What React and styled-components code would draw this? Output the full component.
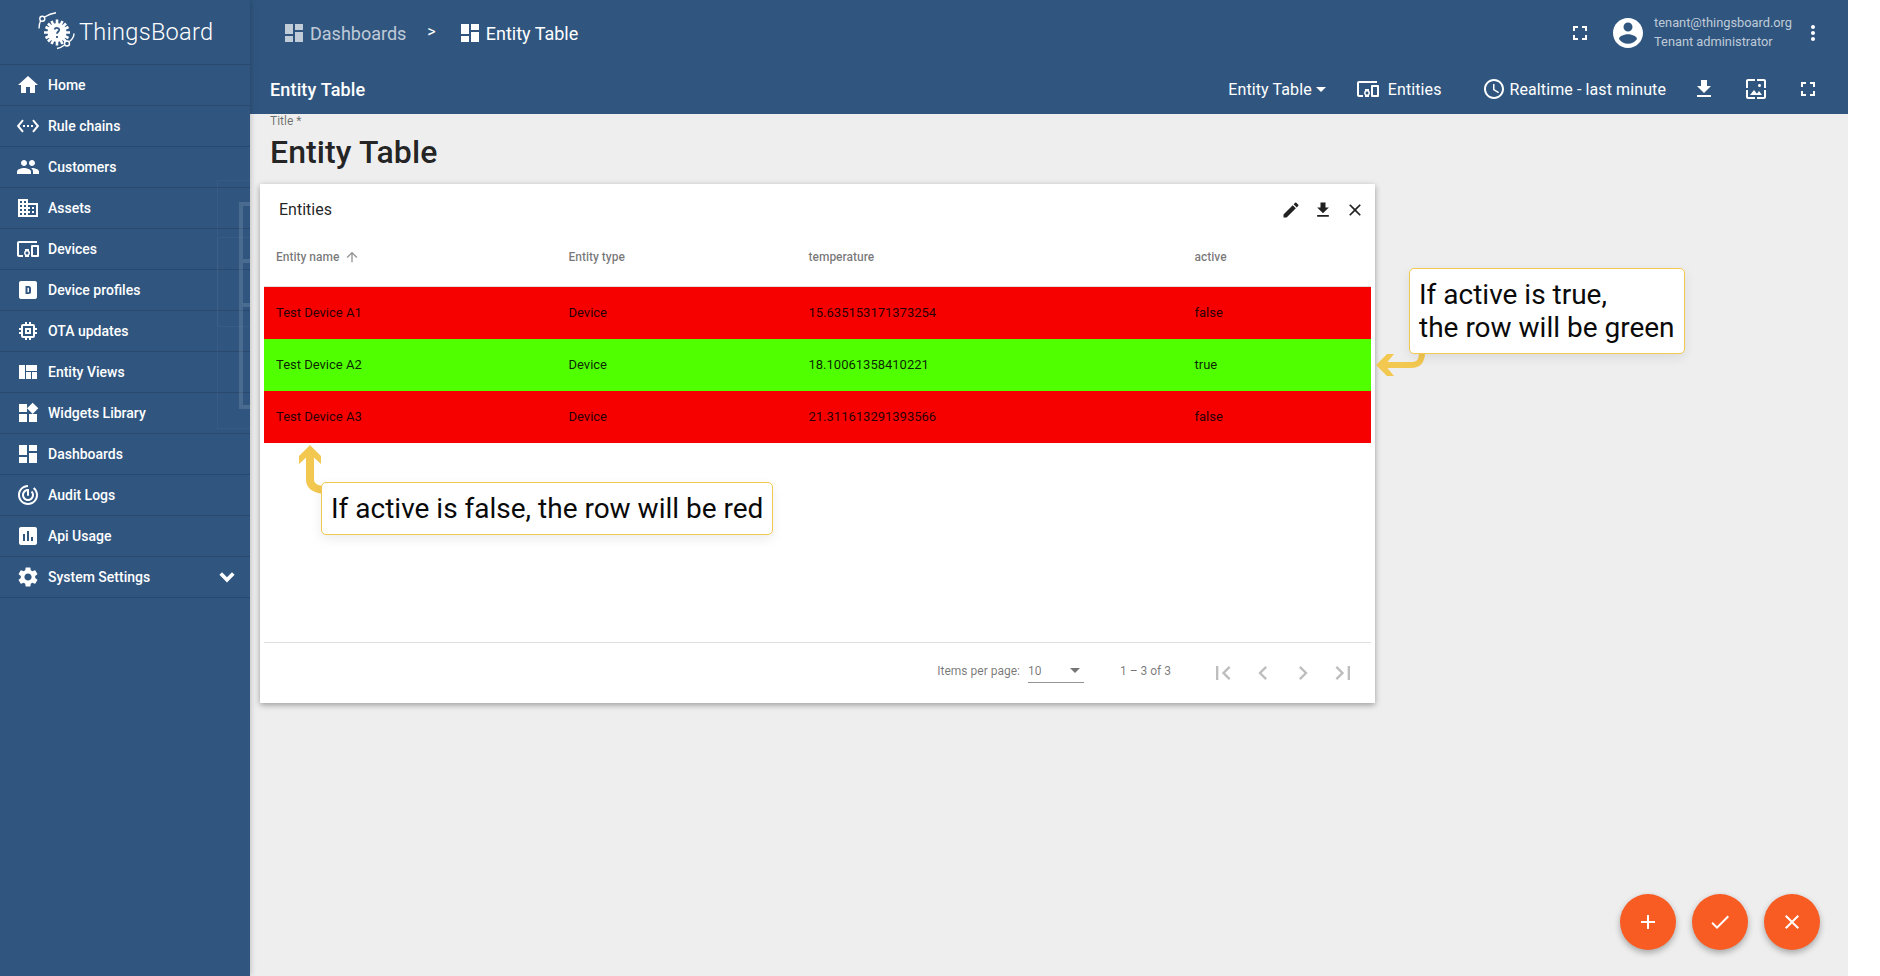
import React from 'react'
import styled, { createGlobalStyle } from 'styled-components'

const GlobalStyle = createGlobalStyle`
  html, body {
    margin: 0;
    padding: 0;
    height: 976px;
    overflow: hidden;
    background: #fff;
    font-family: Roboto, "Liberation Sans", sans-serif;
  }
`

const Page = styled.div`
  position: relative;
  display: flex;
  width: 1848px;
  height: 976px;
  overflow: hidden;
  background: #eeeeee;
`

const Sidebar = styled.aside`
  position: relative;
  width: 250px;
  flex: none;
  background: #305680;
  color: #fff;
  box-shadow: 0 0 6px rgba(0, 0, 0, 0.25);
  z-index: 3;
`

const GhostLines = styled.svg`
  position: absolute;
  left: 217px;
  top: 180px;
  pointer-events: none;
`

const LogoRow = styled.div`
  height: 65px;
  box-sizing: border-box;
  display: flex;
  align-items: center;
  padding: 0 0 0 37px;
  gap: 2px;
  font-size: 23.6px;
  font-weight: 300;
  letter-spacing: 0.25px;
  border-bottom: 1px solid rgba(0, 0, 0, 0.14);
`

const MenuRow = styled.div`
  height: 41px;
  box-sizing: border-box;
  display: flex;
  align-items: center;
  padding: 0 10px 0 16px;
  gap: 8px;
  font-size: 14px;
  font-weight: 500;
  border-bottom: 1px solid rgba(0, 0, 0, 0.14);
`

const MenuIcon = styled.svg`
  width: ${(p) => p.$size || 24}px;
  height: ${(p) => p.$size || 24}px;
  flex: none;
  fill: #fff;
`

const MenuLabel = styled.span`
  flex: 1;
`

const Main = styled.div`
  flex: 1;
  display: flex;
  flex-direction: column;
  min-width: 0;
`

const Header = styled.header`
  height: 114px;
  flex: none;
  background: #305680;
  color: #fff;
  display: flex;
  flex-direction: column;
`

const TopBar = styled.div`
  height: 66px;
  display: flex;
  align-items: center;
  padding: 0 23px 0 32px;
`

const Crumb = styled.div`
  display: flex;
  align-items: center;
  gap: 4px;
  font-size: 18px;
  color: ${(p) => (p.$dim ? 'rgba(255,255,255,0.7)' : '#fff')};
`

const CrumbIcon = styled.svg`
  width: 24px;
  height: 24px;
  fill: currentColor;
`

const CrumbSep = styled.span`
  font-size: 16px;
  margin: 0 22px 0 21px;
  position: relative;
  top: -2px;
`

const Spacer = styled.div`
  flex: 1;
`

const UserBlock = styled.div`
  display: flex;
  flex-direction: column;
  gap: 4px;
  margin: -2px 9px 0 8px;
  font-size: 12.8px;
  line-height: 15px;
  color: rgba(255, 255, 255, 0.7);
`

const BarIcon = styled.svg`
  width: ${(p) => p.$size || 24}px;
  height: ${(p) => p.$size || 24}px;
  fill: #fff;
  flex: none;
  display: block;
  margin-left: ${(p) => p.$ml || 0}px;
`

const ToolBar = styled.div`
  height: 48px;
  box-sizing: border-box;
  display: flex;
  align-items: center;
  padding: 0 28px 2px 20px;
  font-size: 16px;
  letter-spacing: 0.1px;
`

const BoardTitle = styled.div`
  font-size: 18px;
  font-weight: 500;
  letter-spacing: 0.15px;
`

const ToolText = styled.div`
  display: flex;
  align-items: center;
  gap: ${(p) => p.$gap ?? 4}px;
  margin-left: ${(p) => p.$ml || 0}px;
`

const Caret = styled.span`
  width: 0;
  height: 0;
  border-left: 5px solid transparent;
  border-right: 5px solid transparent;
  border-top: 5px solid ${(p) => p.$color || '#fff'};
  display: inline-block;
`

const Content = styled.div`
  flex: 1;
  padding: 0 0 0 10px;
  position: relative;
`

const TitleLabel = styled.div`
  font-size: 12px;
  line-height: 14px;
  color: rgba(0, 0, 0, 0.54);
  margin: 0 0 0 10px;
`

const TitleValue = styled.div`
  font-size: 32px;
  font-weight: 500;
  line-height: 38px;
  letter-spacing: 0.1px;
  color: rgba(0, 0, 0, 0.87);
  margin: 5px 0 0 10px;
`

const Card = styled.section`
  width: 1115px;
  height: 519px;
  box-sizing: border-box;
  margin-top: 13px;
  background: #fff;
  box-shadow: 0 2px 6px rgba(0, 0, 0, 0.35);
  display: flex;
  flex-direction: column;
  padding: 0 4px;
`

const CardHead = styled.div`
  height: 49px;
  box-sizing: border-box;
  flex: none;
  display: flex;
  align-items: center;
  padding: 2px 6px 0 15px;
  font-size: 16px;
  color: rgba(0, 0, 0, 0.87);
`

const CardActions = styled.div`
  display: flex;
  gap: 12px;
`

const GreyIcon = styled.svg`
  width: 20px;
  height: 20px;
  fill: rgba(0, 0, 0, 0.87);
  display: block;
`

const Grid = styled.div`
  display: grid;
  grid-template-columns: 292.5px 240px 386px 1fr;
  height: ${(p) => p.$h}px;
  align-items: center;
  padding: 0 0 ${(p) => (p.$head ? 6 : 2)}px 12px;
  box-sizing: border-box;
  font-size: ${(p) => (p.$head ? 12 : 13)}px;
  background: ${(p) => p.$bg || 'transparent'};
  color: ${(p) => (p.$head ? 'rgba(0,0,0,0.54)' : 'rgba(0,0,0,0.87)')};
  font-weight: ${(p) => (p.$head ? 500 : 400)};
  border-bottom: ${(p) => (p.$head ? '1px solid rgba(0,0,0,0.12)' : 'none')};
`

const HeadCell = styled.div`
  display: flex;
  align-items: center;
  gap: 5px;
`

const SortIcon = styled.svg`
  width: 16px;
  height: 16px;
  fill: rgba(0, 0, 0, 0.42);
`

const Pager = styled.div`
  margin-top: auto;
  height: 61px;
  flex: none;
  box-sizing: border-box;
  border-top: 1px solid rgba(0, 0, 0, 0.12);
  display: flex;
  align-items: center;
  justify-content: flex-end;
  padding: 0 14px 4px 0;
  font-size: 12px;
  color: rgba(0, 0, 0, 0.54);
`

const PageSelect = styled.div`
  width: 56px;
  height: 24px;
  box-sizing: border-box;
  margin: 0 36px 0 8px;
  border-bottom: 1px solid rgba(0, 0, 0, 0.42);
  color: rgba(0, 0, 0, 0.54);
  display: flex;
  align-items: center;
  justify-content: space-between;
  padding: 0 4px 0 0;
`

const PageButtons = styled.div`
  display: flex;
  gap: 12px;
  margin: 4px 0 0 38px;
`

const PageIcon = styled.svg`
  width: 28px;
  height: 28px;
  fill: rgba(0, 0, 0, 0.26);
  display: block;
`

const Callout = styled.div`
  position: absolute;
  left: ${(p) => p.$x}px;
  top: ${(p) => p.$y}px;
  box-sizing: border-box;
  background: #fff;
  border: 1px solid #f3c850;
  border-radius: 5px;
  padding: 9px 9px;
  font-size: 28px;
  line-height: 33px;
  color: #0a0a0a;
  white-space: nowrap;
  box-shadow: 0 4px 12px rgba(0, 0, 0, 0.08);
  z-index: 5;
`

const Arrow = styled.svg`
  position: absolute;
  left: ${(p) => p.$x}px;
  top: ${(p) => p.$y}px;
  z-index: 4;
`

const Fabs = styled.div`
  position: absolute;
  right: 28px;
  bottom: 26px;
  display: flex;
  gap: 16px;
  z-index: 4;
`

const Fab = styled.div`
  width: 56px;
  height: 56px;
  border-radius: 50%;
  background: #f85c23;
  box-shadow: 0 3px 6px rgba(0, 0, 0, 0.3);
  display: flex;
  align-items: center;
  justify-content: center;
`

const paths = {
  home: 'M10 20v-6h4v6h5v-8h3L12 3 2 12h3v8z',
  rule: 'M7.77 6.76L6.23 5.48.82 12l5.41 6.52 1.54-1.28L3.42 12l4.35-5.24zM7 13h2v-2H7v2zm10-2h-2v2h2v-2zm-6 2h2v-2h-2v2zm6.77-7.52l-1.54 1.28L20.58 12l-4.35 5.24 1.54 1.28L23.18 12l-5.41-6.52z',
  people: 'M16 11c1.66 0 2.99-1.34 2.99-3S17.66 5 16 5s-3 1.34-3 3 1.34 3 3 3zm-8 0c1.66 0 2.99-1.34 2.99-3S9.66 5 8 5 5 6.34 5 8s1.34 3 3 3zm0 2c-2.33 0-7 1.17-7 3.5V19h14v-2.5C15 14.17 10.33 13 8 13zm8 0c-.29 0-.62.02-.97.05 1.16.84 1.97 1.97 1.97 3.45V19h6v-2.5c0-2.33-4.67-3.5-7-3.5z',
  domain: 'M12 7V3H2v18h20V7H12zM6 19H4v-2h2v2zm0-4H4v-2h2v2zm0-4H4V9h2v2zm0-4H4V5h2v2zm4 12H8v-2h2v2zm0-4H8v-2h2v2zm0-4H8V9h2v2zm0-4H8V5h2v2zm10 12h-8v-2h2v-2h-2v-2h2v-2h-2V9h8v10zm-2-8h-2v2h2v-2zm0 4h-2v2h2v-2z',
  devices: 'M3 6h18V4H3c-1.1 0-2 .9-2 2v12c0 1.1.9 2 2 2h4v-2H3V6zm10 6H9v1.78c-.61.55-1 1.33-1 2.22s.39 1.67 1 2.22V20h4v-1.78c.61-.55 1-1.34 1-2.22s-.39-1.67-1-2.22V12zm-2 5.5c-.83 0-1.5-.67-1.5-1.5s.67-1.5 1.5-1.5 1.5.67 1.5 1.5-.67 1.5-1.5 1.5zM22 8h-6c-.5 0-1 .5-1 1v10c0 .5.5 1 1 1h6c.5 0 1-.5 1-1V9c0-.5-.5-1-1-1zm-1 10h-4v-8h4v8z',
  profile: 'M19 3H5c-1.1 0-2 .9-2 2v14c0 1.1.9 2 2 2h14c1.1 0 2-.9 2-2V5c0-1.1-.9-2-2-2zM9.5 8h3.2c1.5 0 2.3 1 2.3 2.3v3.4c0 1.3-.8 2.3-2.3 2.3H9.5V8zm2 1.7v4.6h.9c.4 0 .6-.3.6-.7v-3.2c0-.4-.2-.7-.6-.7h-.9z',
  chip: 'M15 9H9v6h6V9zm-2 4h-2v-2h2v2zm8-2V9h-2V7c0-1.1-.9-2-2-2h-2V3h-2v2h-2V3H9v2H7c-1.1 0-2 .9-2 2v2H3v2h2v2H3v2h2v2c0 1.1.9 2 2 2h2v2h2v-2h2v2h2v-2h2c1.1 0 2-.9 2-2v-2h2v-2h-2v-2h2zm-4 6H7V7h10v10z',
  view: 'M3 5v14h6V5H3zm7 0v6h11V5H10zm0 7v7h5v-7h-5zm6 0v7h5v-7h-5z',
  widgets: 'M13 13v8h8v-8h-8zM3 21h8v-8H3v8zM3 3v8h8V3H3zm13.66-1.31L11 7.34 16.66 13l5.66-5.66-5.66-5.65z',
  dashboard: 'M3 13h8V3H3v10zm0 8h8v-6H3v6zm10 0h8V11h-8v10zm0-18v6h8V3h-8z',
  audit: 'M12 2C6.48 2 2 6.48 2 12s4.48 10 10 10 10-4.48 10-10c0-3.1-1.41-5.87-3.62-7.7l-1.42 1.42C18.8 7.2 20 9.46 20 12c0 4.42-3.58 8-8 8s-8-3.58-8-8 3.58-8 8-8V2zm0 4c-3.31 0-6 2.69-6 6s2.69 6 6 6 6-2.69 6-6c0-1.66-.67-3.16-1.76-4.24l-1.42 1.42C15.55 9.9 16 10.9 16 12c0 2.21-1.79 4-4 4s-4-1.79-4-4 1.79-4 4-4V6zm-1 0v6a1 1 0 0 0 2 0V6h-2z',
  usage: 'M19 3H5c-1.1 0-2 .9-2 2v14c0 1.1.9 2 2 2h14c1.1 0 2-.9 2-2V5c0-1.1-.9-2-2-2zM9 17H7v-7h2v7zm4 0h-2V7h2v10zm4 0h-2v-4h2v4z',
  settings: 'M19.14 12.94c.04-.3.06-.61.06-.94 0-.32-.02-.64-.07-.94l2.03-1.58a.49.49 0 0 0 .12-.61l-1.92-3.32a.488.488 0 0 0-.59-.22l-2.39.96c-.5-.38-1.03-.7-1.62-.94l-.36-2.54a.484.484 0 0 0-.48-.41h-3.84c-.24 0-.43.17-.47.41l-.36 2.54c-.59.24-1.13.57-1.62.94l-2.39-.96c-.22-.08-.47 0-.59.22L2.74 8.87c-.12.21-.08.47.12.61l2.03 1.58c-.05.3-.09.63-.09.94s.02.64.07.94l-2.03 1.58a.49.49 0 0 0-.12.61l1.92 3.32c.12.22.37.29.59.22l2.39-.96c.5.38 1.03.7 1.62.94l.36 2.54c.05.24.24.41.48.41h3.84c.24 0 .44-.17.47-.41l.36-2.54c.59-.24 1.13-.56 1.62-.94l2.39.96c.22.08.47 0 .59-.22l1.92-3.32c.12-.22.07-.47-.12-.61l-2.01-1.58zM12 15.6c-1.98 0-3.6-1.62-3.6-3.6s1.62-3.6 3.6-3.6 3.6 1.62 3.6 3.6-1.62 3.6-3.6 3.6z',
  chevron: 'M7.41 7.59L12 12.17l4.59-4.58L19 10l-7 7-7-7z',
  fullscreen: 'M7 14H5v5h5v-2H7v-3zm-2-4h2V7h3V5H5v5zm12 7h-3v2h5v-5h-2v3zM14 5v2h3v3h2V5h-5z',
  account: 'M12 2C6.48 2 2 6.48 2 12s4.48 10 10 10 10-4.48 10-10S17.52 2 12 2zm0 3c1.66 0 3 1.34 3 3s-1.34 3-3 3-3-1.34-3-3 1.34-3 3-3zm0 14.2c-2.5 0-4.71-1.28-6-3.22.03-1.99 4-3.08 6-3.08 1.99 0 5.97 1.09 6 3.08-1.29 1.94-3.5 3.22-6 3.22z',
  more: 'M12 8c1.1 0 2-.9 2-2s-.9-2-2-2-2 .9-2 2 .9 2 2 2zm0 2c-1.1 0-2 .9-2 2s.9 2 2 2 2-.9 2-2-.9-2-2-2zm0 6c-1.1 0-2 .9-2 2s.9 2 2 2 2-.9 2-2-.9-2-2-2z',
  clock: 'M11.99 2C6.47 2 2 6.48 2 12s4.47 10 9.99 10C17.52 22 22 17.52 22 12S17.52 2 11.99 2zM12 20c-4.42 0-8-3.58-8-8s3.58-8 8-8 8 3.58 8 8-3.58 8-8 8zm.5-13H11v6l5.25 3.15.75-1.23-4.5-2.67z',
  download: 'M19 9h-4V3H9v6H5l7 7 7-7zM5 18v2h14v-2H5z',
  wallpaper: 'M4 4h7V2H4c-1.1 0-2 .9-2 2v7h2V4zm6 9l-4 5h12l-3-4-2.03 2.71L10 13zm7-4.5c0-.83-.67-1.5-1.5-1.5S14 7.67 14 8.5s.67 1.5 1.5 1.5S17 9.33 17 8.5zM20 2h-7v2h7v7h2V4c0-1.1-.9-2-2-2zm0 18h-7v2h7c1.1 0 2-.9 2-2v-7h-2v7zM4 13H2v7c0 1.1.9 2 2 2h7v-2H4v-7z',
  edit: 'M3 17.25V21h3.75L17.81 9.94l-3.75-3.75L3 17.25zM20.71 7.04a1 1 0 0 0 0-1.41l-2.34-2.34a1 1 0 0 0-1.41 0l-1.83 1.83 3.75 3.75 1.83-1.83z',
  close: 'M19 6.41L17.59 5 12 10.59 6.41 5 5 6.41 10.59 12 5 17.59 6.41 19 12 13.41 17.59 19 19 17.59 13.41 12z',
  up: 'M4 12l1.41 1.41L11 7.83V20h2V7.83l5.58 5.59L20 12l-8-8-8 8z',
  first: 'M18.41 16.59L13.82 12l4.59-4.59L17 6l-6 6 6 6zM6 6h2v12H6z',
  prev: 'M15.41 7.41L14 6l-6 6 6 6 1.41-1.41L10.83 12z',
  next: 'M10 6L8.59 7.41 13.17 12l-4.58 4.59L10 18l6-6z',
  last: 'M5.59 7.41L10.18 12l-4.59 4.59L7 18l6-6-6-6zM16 6h2v12h-2z',
  add: 'M19 13h-6v6h-2v-6H5v-2h6V5h2v6h6v2z',
  check: 'M9 16.17L4.83 12l-1.42 1.41L9 19 21 7l-1.41-1.41z',
}

const menu = [
  ['Home', 'home'],
  ['Rule chains', 'rule'],
  ['Customers', 'people'],
  ['Assets', 'domain'],
  ['Devices', 'devices'],
  ['Device profiles', 'profile'],
  ['OTA updates', 'chip'],
  ['Entity Views', 'view'],
  ['Widgets Library', 'widgets'],
  ['Dashboards', 'dashboard'],
  ['Audit Logs', 'audit'],
  ['Api Usage', 'usage'],
  ['System Settings', 'settings', true],
]

const rows = [
  ['Test Device A1', 'Device', '15.635153171373254', 'false', '#f70000'],
  ['Test Device A2', 'Device', '18.10061358410221', 'true', '#50ff00'],
  ['Test Device A3', 'Device', '21.311613291393566', 'false', '#f70000'],
]

const Logo = () => (
  <svg width="40" height="40" viewBox="0 0 40 40" fill="none" stroke="#fff">
    <g transform="translate(-2 .5)">
      <circle cx="22" cy="20" r="9.5" fill="#fff" stroke="none" />
      <path d="M22 7v26M9 20h26M13 11l18 18M31 11L13 29M16.5 8.5l11 23M27.5 8.5l-11 23M10.5 14.5l23 11M33.5 14.5l-23 11" strokeWidth="2.6" />
      <path d="M19.5 17c.8-2.4 5.4-1.8 4.6.8-.5 1.5-2.1 1.7-2.1 3.4M22 23.4v2" stroke="#305680" strokeWidth="1.8" />
    </g>
    <circle cx="5.3" cy="6.8" r="2.5" strokeWidth="1.4" />
    <path d="M7.5 5C11 3 15 1.5 19 .8M3.5 9C2 12 2 14 2 16.5" strokeWidth="1.4" />
    <circle cx="30" cy="31.5" r="2.5" strokeWidth="1.4" />
    <path d="M27.5 33C25 35 22.5 36 20 36.5M32.5 29.5C35 27.5 37 24 37 21.5" strokeWidth="1.4" />
  </svg>
)

const App = () => {
  return (
    <Page>
      <GlobalStyle />
      <Sidebar>
        <LogoRow>
          <Logo />
          <span>ThingsBoard</span>
        </LogoRow>
        {menu.map(([label, icon, more]) => (
          <MenuRow key={label}>
            <MenuIcon viewBox="0 0 24 24"><path d={paths[icon]} /></MenuIcon>
            <MenuLabel>{label}</MenuLabel>
            {more && <MenuIcon $size={26} viewBox="0 0 24 24"><path d={paths.chevron} /></MenuIcon>}
          </MenuRow>
        ))}
        <GhostLines width="33" height="250" viewBox="0 0 33 250" fill="none">
          <path d="M33 .5H.5v248H33M33 57.5H.5v89H33" stroke="rgba(255,255,255,0.035)" />
          <path d="M33 24H24v203h9M33 81H24v44h9" stroke="rgba(255,255,255,0.13)" strokeWidth="4" />
        </GhostLines>
      </Sidebar>
      <Main>
        <Header>
          <TopBar>
            <Crumb $dim>
              <CrumbIcon viewBox="0 0 24 24"><path d={paths.dashboard} /></CrumbIcon>
              Dashboards
            </Crumb>
            <CrumbSep>&gt;</CrumbSep>
            <Crumb>
              <CrumbIcon viewBox="0 0 24 24"><path d={paths.dashboard} /></CrumbIcon>
              Entity Table
            </Crumb>
            <Spacer />
            <BarIcon viewBox="0 0 24 24"><path d={paths.fullscreen} /></BarIcon>
            <BarIcon $size={36} $ml={18} viewBox="0 0 24 24"><path d={paths.account} /></BarIcon>
            <UserBlock>
              <span>tenant@thingsboard.org</span>
              <span>Tenant administrator</span>
            </UserBlock>
            <BarIcon viewBox="0 0 24 24"><path d={paths.more} /></BarIcon>
          </TopBar>
          <ToolBar>
            <BoardTitle>Entity Table</BoardTitle>
            <Spacer />
            <ToolText>Entity Table <Caret /></ToolText>
            <ToolText $gap={8} $ml={30}>
              <BarIcon viewBox="0 0 24 24"><path d={paths.devices} /></BarIcon>
              Entities
            </ToolText>
            <ToolText $gap={4} $ml={40}>
              <BarIcon viewBox="0 0 24 24"><path d={paths.clock} /></BarIcon>
              Realtime - last minute
            </ToolText>
            <BarIcon $ml={26} viewBox="0 0 24 24"><path d={paths.download} /></BarIcon>
            <BarIcon $ml={28} viewBox="0 0 24 24"><path d={paths.wallpaper} /></BarIcon>
            <BarIcon $ml={28} viewBox="0 0 24 24"><path d={paths.fullscreen} /></BarIcon>
          </ToolBar>
        </Header>
        <Content>
          <TitleLabel>Title *</TitleLabel>
          <TitleValue>Entity Table</TitleValue>
          <Card>
            <CardHead>
              Entities
              <Spacer />
              <CardActions>
                <GreyIcon viewBox="0 0 24 24"><path d={paths.edit} /></GreyIcon>
                <GreyIcon viewBox="0 0 24 24"><path d={paths.download} /></GreyIcon>
                <GreyIcon viewBox="0 0 24 24"><path d={paths.close} /></GreyIcon>
              </CardActions>
            </CardHead>
            <Grid $head $h={54}>
              <HeadCell>Entity name <SortIcon viewBox="0 0 24 24"><path d={paths.up} /></SortIcon></HeadCell>
              <HeadCell>Entity type</HeadCell>
              <HeadCell>temperature</HeadCell>
              <HeadCell>active</HeadCell>
            </Grid>
            {rows.map(([name, type, temp, active, bg]) => (
              <Grid key={name} $h={52} $bg={bg}>
                <div>{name}</div>
                <div>{type}</div>
                <div>{temp}</div>
                <div>{active}</div>
              </Grid>
            ))}
            <Pager>
              Items per page:
              <PageSelect>10 <Caret $color="rgba(0,0,0,0.54)" /></PageSelect>
              1 – 3 of 3
              <PageButtons>
                <PageIcon viewBox="0 0 24 24"><path d={paths.first} /></PageIcon>
                <PageIcon viewBox="0 0 24 24"><path d={paths.prev} /></PageIcon>
                <PageIcon viewBox="0 0 24 24"><path d={paths.next} /></PageIcon>
                <PageIcon viewBox="0 0 24 24"><path d={paths.last} /></PageIcon>
              </PageButtons>
            </Pager>
          </Card>
        </Content>
      </Main>

      <Callout $x={1409} $y={268}>If active is true,<br />the row will be green</Callout>
      <Arrow $x={1375} $y={352} width="52" height="26" viewBox="0 0 52 26" fill="none" stroke="#f3c850" strokeWidth="6">
        <path d="M47 0c0 9-3 13-11 13H8" />
        <path d="M1 13L12 2h7l-9 11 9 11h-7z" fill="#f3c850" stroke="none" />
      </Arrow>
      <Callout $x={321} $y={482}>If active is false, the row will be red</Callout>
      <Arrow $x={296} $y={444} width="30" height="54" viewBox="0 0 30 54" fill="none" stroke="#f3c850" strokeWidth="8">
        <path d="M30 46c-10 0-16-4-16-10V8" />
        <path d="M14 1l11 11v8L14 10 3 20v-8z" fill="#f3c850" stroke="none" />
      </Arrow>

      <Fabs>
        <Fab><BarIcon viewBox="0 0 24 24"><path d={paths.add} /></BarIcon></Fab>
        <Fab><BarIcon viewBox="0 0 24 24"><path d={paths.check} /></BarIcon></Fab>
        <Fab><BarIcon viewBox="0 0 24 24"><path d={paths.close} /></BarIcon></Fab>
      </Fabs>
    </Page>
  )
}

export default App
